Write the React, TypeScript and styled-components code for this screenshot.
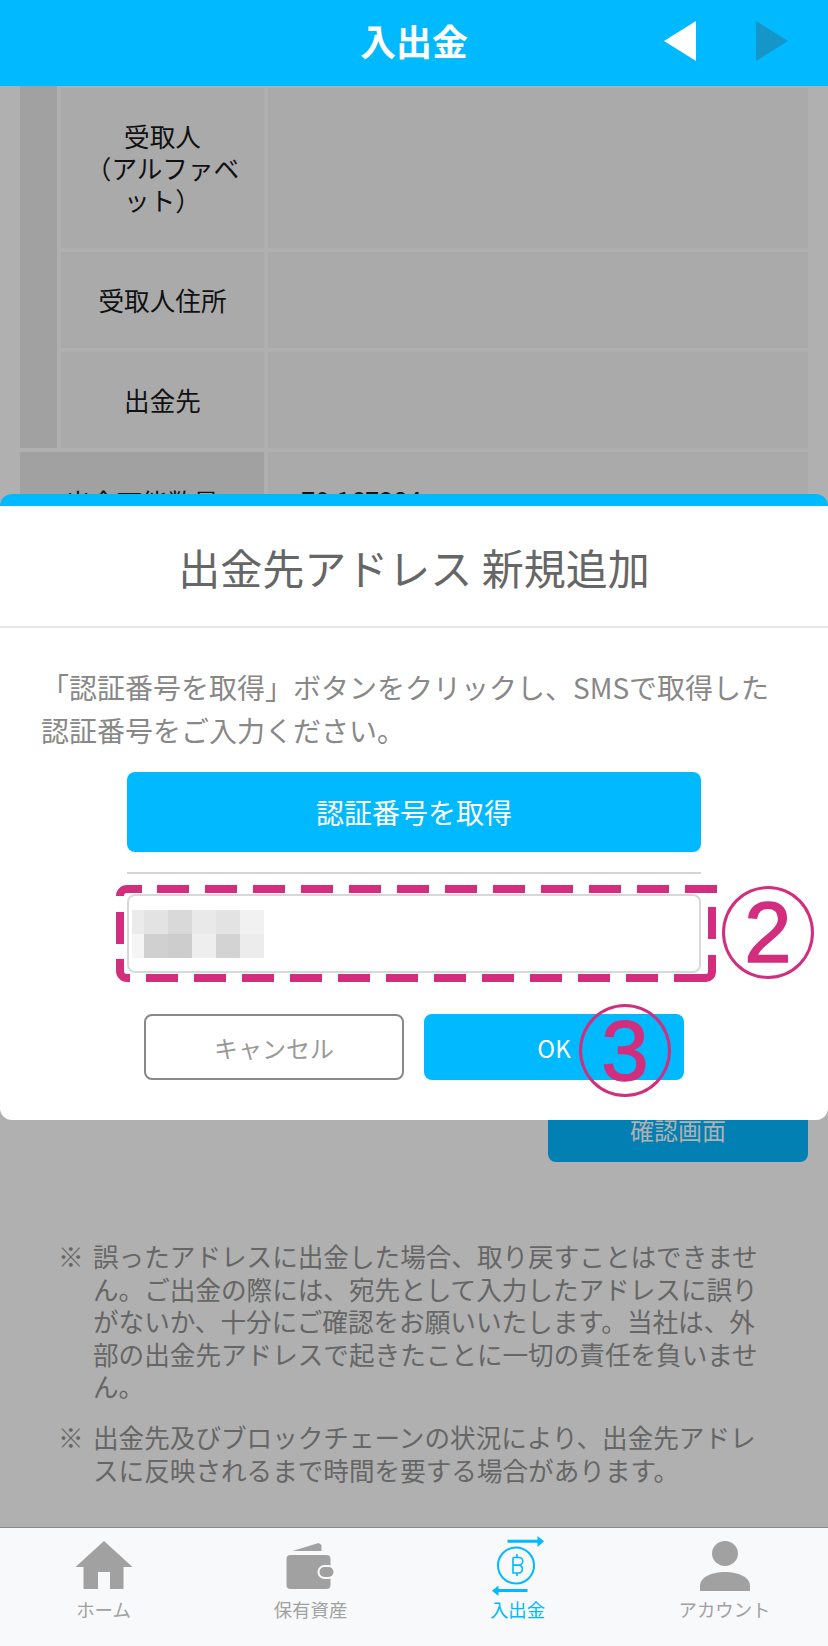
import styled, { createGlobalStyle } from "styled-components"

const GlobalStyle = createGlobalStyle`
  html, body {
    margin: 0;
    padding: 0;
    background: #b0b0b0;
  }
  * {
    box-sizing: border-box;
  }
`

const blue = "#00b9ff"
const pink = "#d22e7d"

const mosaic = [
  "#ebebeb", "#e3e3e3", "#d9d9d9", "#e9e9e9", "#e3e3e3", "#f1f1f1",
  "#f5f5f5", "#d0d0d0", "#cdcdcd", "#eeeeee", "#d3d3d3", "#ececec",
]

export default function App() {
  return (
    <Screen>
      <GlobalStyle />

      <Header>
        <HeaderTitle>入出金</HeaderTitle>
        <PagerIcon $left={664} width="32" height="40" viewBox="0 0 32 40">
          <path d="M32 0V40L0 20Z" fill="#fff" />
        </PagerIcon>
        <PagerIcon $left={756} width="32" height="40" viewBox="0 0 32 40">
          <path d="M0 0V40L32 20Z" fill="#1695c8" />
        </PagerIcon>
      </Header>

      <Content>
        <FormTable>
          <SideCell />
          <LabelCell>
            <span>受取人<br />（アルファベット）</span>
          </LabelCell>
          <ValueCell />
          <LabelCell>受取人住所</LabelCell>
          <ValueCell />
          <LabelCell>出金先</LabelCell>
          <ValueCell />
          <WideLabelCell>出金可能数量</WideLabelCell>
          <AmountCell>70.167284</AmountCell>
        </FormTable>

        <ConfirmRow>
          <ConfirmButton>確認画面</ConfirmButton>
        </ConfirmRow>

        <Notes>
          <Note>
            <span>※</span>
            <p>誤ったアドレスに出金した場合、取り戻すことはできません。ご出金の際には、宛先として入力したアドレスに誤りがないか、十分にご確認をお願いいたします。当社は、外部の出金先アドレスで起きたことに一切の責任を負いません。</p>
          </Note>
          <Note>
            <span>※</span>
            <p>出金先及びブロックチェーンの状況により、出金先アドレスに反映されるまで時間を要する場合があります。</p>
          </Note>
        </Notes>
      </Content>

      <BottomNav>
        <NavItem>
          <svg width="60" height="60" viewBox="0 0 60 60">
            <path d="M30 5L58.5 31H49.5V53H36V36H24V53H9.5V31H1.5Z" fill="#a1a1a1" />
          </svg>
          <NavLabel>ホーム</NavLabel>
        </NavItem>
        <NavItem>
          <svg width="60" height="60" viewBox="0 0 60 60">
            <path d="M11.5 15L37.5 7L40.5 9V15Z" fill="#a1a1a1" />
            <rect x="5.5" y="19" width="44" height="34" rx="4" fill="#a1a1a1" />
            <rect x="37.5" y="30" width="16" height="12" rx="6" fill="#a1a1a1" stroke="#f8f9fb" strokeWidth="2" />
          </svg>
          <NavLabel>保有資産</NavLabel>
        </NavItem>
        <NavItem>
          <svg width="60" height="60" viewBox="0 0 60 60">
            <circle cx="28" cy="29.5" r="18" fill="none" stroke={blue} strokeWidth="2" />
            <path d="M25 21.5H31a3.8 3.8 0 0 1 0 7.6H25M31 29.1a4 4 0 0 1 0 7.9H25V21.5M29 18V21.5M29 37V40" fill="none" stroke={blue} strokeWidth="1.6" />
            <path d="M19.5 3.8H49.5V0L56 5.3L49.5 11V6.8H19.5Z" fill={blue} />
            <path d="M39.5 53H10.5V49.5L4 54.7L10.5 60V56H39.5Z" fill={blue} />
          </svg>
          <NavLabel $active>入出金</NavLabel>
        </NavItem>
        <NavItem>
          <svg width="60" height="60" viewBox="0 0 60 60">
            <ellipse cx="30" cy="17.5" rx="13" ry="12.5" fill="#a1a1a1" />
            <path d="M5 55V50C5 41 17 36 30 36C43 36 55 41 55 50V55Z" fill="#a1a1a1" />
          </svg>
          <NavLabel>アカウント</NavLabel>
        </NavItem>
      </BottomNav>

      <Modal>
        <ModalTitle>出金先アドレス 新規追加</ModalTitle>
        <ModalBody>
          <ModalText>「認証番号を取得」ボタンをクリックし、SMSで取得した認証番号をご入力ください。</ModalText>
          <CodeButton>認証番号を取得</CodeButton>
          <Separator />
          <CodeInput>
            <Mosaic>
              {mosaic.map((shade, i) => (
                <MosaicCell key={i} $shade={shade} />
              ))}
            </Mosaic>
          </CodeInput>
          <ActionRow>
            <CancelButton>キャンセル</CancelButton>
            <OkButton>OK</OkButton>
          </ActionRow>
        </ModalBody>
      </Modal>

      <DashOverlay width="828" height="1646" viewBox="0 0 828 1646">
        <g fill="none" stroke={pink} strokeWidth="8">
          <path d="M120 896A7 7 0 0 1 127 889H142" />
          <path d="M157 889H717" strokeDasharray="32 16" />
          <path d="M712 907V939M712 955V972A6 6 0 0 1 706 978" />
          <path d="M146 978H706" strokeDasharray="32 16" />
          <path d="M120 912V944M120 959V971A7 7 0 0 0 127 978H130" />
        </g>
      </DashOverlay>
      <Marker $left={722} $top={886}>2</Marker>
      <Marker $left={579} $top={1004}>3</Marker>
    </Screen>
  )
}

const Screen = styled.div`
  position: relative;
  width: 828px;
  height: 1646px;
  display: flex;
  flex-direction: column;
  overflow: hidden;
  background: #b0b0b0;
  font-family: "Noto Sans CJK JP", "Noto Sans", sans-serif;
`

const Header = styled.header`
  position: relative;
  flex: 0 0 86px;
  display: flex;
  align-items: center;
  justify-content: center;
  background: ${blue};
`

const HeaderTitle = styled.h1`
  margin: 0 0 7px;
  font-size: 36px;
  font-weight: 700;
  color: #fff;
`

const PagerIcon = styled.svg<{ $left: number }>`
  position: absolute;
  top: 21px;
  left: ${(p) => p.$left}px;
`

const Content = styled.main`
  flex: 1;
  min-height: 0;
  padding: 2px 20px 0;
  overflow: hidden;
`

const FormTable = styled.div`
  display: grid;
  grid-template-columns: 37px 203px 540px;
  grid-template-rows: 160px 96px 96px 100px;
  gap: 4px;
  font-size: 25.6px;
  line-height: 32px;
  color: #111;
`

const SideCell = styled.div`
  grid-row: 1 / span 3;
  margin-top: -2px;
  background: #a1a1a1;
`

const LabelCell = styled.div`
  display: flex;
  align-items: center;
  justify-content: center;
  padding: 0 20px;
  text-align: center;
  background: #aaaaaa;
`

const WideLabelCell = styled(LabelCell)`
  grid-column: 1 / span 2;
  background: #a1a1a1;
`

const ValueCell = styled.div`
  display: flex;
  align-items: center;
  padding-left: 33px;
  background: #aaaaaa;
`

const AmountCell = styled(ValueCell)`
  padding-bottom: 6px;
`

const ConfirmRow = styled.div`
  display: flex;
  justify-content: flex-end;
  margin-top: 544px;
`

const ConfirmButton = styled.div`
  display: flex;
  align-items: center;
  justify-content: center;
  width: 260px;
  height: 66px;
  border-radius: 8px;
  background: #0280b3;
  color: #b0b0b0;
  font-size: 24px;
`

const Notes = styled.div`
  display: flex;
  flex-direction: column;
  gap: 18px;
  margin-top: 78px;
  padding-left: 38px;
`

const Note = styled.div`
  display: grid;
  grid-template-columns: 35px 672px;
  font-size: 25.6px;
  line-height: 32.6px;
  color: #666;

  p {
    margin: 0;
  }
`

const BottomNav = styled.nav`
  flex: 0 0 119px;
  display: grid;
  grid-template-columns: repeat(4, 1fr);
  padding-top: 8px;
  border-top: 1px solid #888;
  background: #f8f9fb;
`

const NavItem = styled.div`
  display: flex;
  flex-direction: column;
  align-items: center;
`

const NavLabel = styled.span<{ $active?: boolean }>`
  margin-top: -1px;
  font-size: 18.4px;
  line-height: 28px;
  font-weight: 400;
  color: ${(p) => (p.$active ? blue : "#a1a1a1")};
`

const Modal = styled.section`
  position: absolute;
  top: 494px;
  left: 0;
  width: 828px;
  height: 626px;
  border-top: 12px solid ${blue};
  border-radius: 12px;
  background: #fff;
`

const ModalTitle = styled.h2`
  display: flex;
  align-items: center;
  justify-content: center;
  height: 122px;
  margin: 0;
  border-bottom: 2px solid #e8e8e8;
  font-size: 42px;
  font-weight: 400;
  color: #666;
`

const ModalBody = styled.div`
  display: flex;
  flex-direction: column;
  align-items: center;
  padding-top: 38px;
`

const ModalText = styled.p`
  width: 100%;
  margin: 0 0 20px;
  padding: 0 38px 0 41px;
  font-size: 28px;
  line-height: 43px;
  color: #888;
`

const CodeButton = styled.div`
  display: flex;
  align-items: center;
  justify-content: center;
  width: 574px;
  height: 80px;
  border-radius: 8px;
  background: ${blue};
  color: #fff;
  font-size: 28px;
`

const Separator = styled.hr`
  width: 574px;
  height: 2px;
  margin: 20px 0;
  border: 0;
  background: #d5d5d5;
`

const CodeInput = styled.div`
  width: 574px;
  height: 79px;
  padding: 14px 0 0 3px;
  border: 2px solid #d8d8d8;
  border-radius: 8px;
  background: #fff;
`

const Mosaic = styled.div`
  display: grid;
  grid-template-columns: 12px repeat(5, 24px);
  grid-auto-rows: 24px;
  width: 132px;
`

const MosaicCell = styled.div<{ $shade: string }>`
  background: ${(p) => p.$shade};
`

const ActionRow = styled.div`
  display: flex;
  justify-content: center;
  gap: 20px;
  margin-top: 41px;
`

const CancelButton = styled.div`
  display: flex;
  align-items: center;
  justify-content: center;
  width: 260px;
  height: 66px;
  border: 2px solid #888;
  border-radius: 8px;
  color: #999;
  font-size: 24px;
`

const OkButton = styled(CancelButton)`
  border: 0;
  background: ${blue};
  color: #fff;
`

const DashOverlay = styled.svg`
  position: absolute;
  top: 0;
  left: 0;
  pointer-events: none;
`

const Marker = styled.div<{ $left: number; $top: number }>`
  position: absolute;
  top: ${(p) => p.$top}px;
  left: ${(p) => p.$left}px;
  display: flex;
  align-items: center;
  justify-content: center;
  width: 92px;
  height: 93px;
  border: 3.5px solid ${pink};
  border-radius: 50%;
  color: ${pink};
  font-family: "Liberation Sans", Arial, sans-serif;
  font-size: 85px;
  line-height: 1;
  -webkit-text-stroke: 1.5px ${pink};
`
